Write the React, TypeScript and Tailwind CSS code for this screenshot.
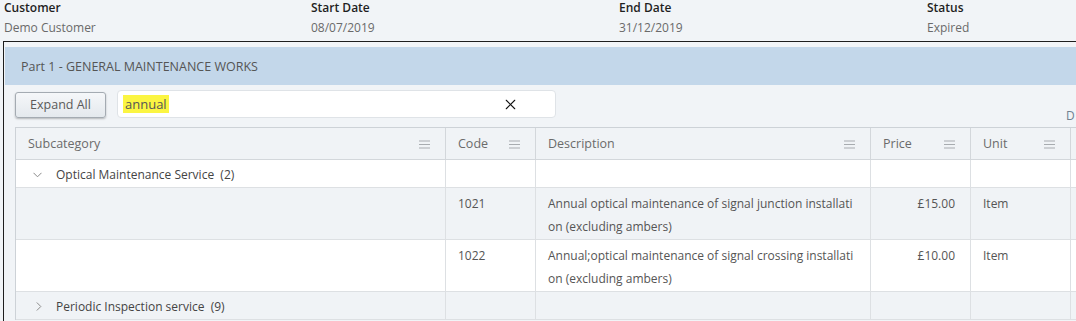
import React from 'react';
import { X } from 'lucide-react';

const font = { fontFamily: '"Open Sans", "Noto Sans", sans-serif' };

const MenuIcon = () => (
  <svg width="11" height="9" viewBox="0 0 11 9" className="shrink-0">
    <path d="M0 1h11M0 4.5h11M0 8h11" stroke="#a8acb0" strokeWidth="1.2" />
  </svg>
);

const ChevronDown = () => (
  <svg width="9" height="6" viewBox="0 0 9 6">
    <path d="M0.5 0.8l4 4 4-4" fill="none" stroke="#8a8a8a" strokeWidth="1" />
  </svg>
);

const ChevronRight = () => (
  <svg width="6" height="9" viewBox="0 0 6 9">
    <path d="M0.8 0.5l4 4-4 4" fill="none" stroke="#8a8a8a" strokeWidth="1" />
  </svg>
);

const cols = 'grid grid-cols-[430px_90px_335px_100px_100px_40px]';

export default function App() {
  const info = [
    { label: 'Customer', value: 'Demo Customer' },
    { label: 'Start Date', value: '08/07/2019' },
    { label: 'End Date', value: '31/12/2019' },
    { label: 'Status', value: 'Expired' },
  ];

  const headers = ['Subcategory', 'Code', 'Description', 'Price', 'Unit', ''];

  const items = [
    {
      code: '1021',
      lines: ['Annual optical maintenance of signal junction installati', 'on (excluding ambers)'],
      price: '£15.00',
      unit: 'Item',
      bg: 'bg-[#f0f3f6]',
    },
    {
      code: '1022',
      lines: ['Annual;optical maintenance of signal crossing installati', 'on (excluding ambers)'],
      price: '£10.00',
      unit: 'Item',
      bg: 'bg-white',
    },
  ];

  return (
    <div className="w-[1076px] h-[321px] overflow-hidden bg-[#f1f4f7] text-[12px]" style={font}>
      <div className="grid grid-cols-[307px_308px_308px_308px] pl-[4px]">
        {info.map((f) => (
          <div key={f.label} className="flex flex-col">
            <span className="font-semibold text-[#1f1f1f] leading-[16px]">{f.label}</span>
            <span className="text-[#6a6a6a] leading-[16px] mt-[4px]">{f.value}</span>
          </div>
        ))}
      </div>

      <div className="mt-[5px] ml-[3px] border-l border-t border-[#1e1e1e] pt-[5px] pl-px w-[1200px] h-[300px]">
        <div className="h-[38px] bg-[#c3d7ea] flex items-center pl-[16px] pt-[2px] text-[12.5px] text-[#555]">
          Part 1 - GENERAL MAINTENANCE WORKS
        </div>

        <div className="relative h-[42px] flex items-start pl-[10px]">
          <button className="mt-[7px] h-[26px] w-[91px] rounded-[3px] border border-[#a4abb2] bg-gradient-to-b from-[#f5f7f9] to-[#e4e9ed] text-[12.5px] text-[#5a5a5a] shadow-[0_1px_2px_rgba(0,0,0,0.25)]">
            Expand All
          </button>
          <div className="ml-[11px] mt-[5px] h-[28px] w-[439px] rounded-[4px] border border-[#dfe3e7] bg-white flex items-center pl-[5px] pr-[36px] justify-between">
            <span className="bg-[#fbf542] text-[13px] text-[#555] px-[2px] leading-[18px]">annual</span>
            <X size={17} strokeWidth={1.5} color="#111" />
          </div>
          <span className="absolute left-[1061px] top-[22px] text-[#708090] text-[12px]">D</span>
        </div>

        <div className="ml-[10px] border-l border-t border-[#cdd2d7] text-[#555]">
          <div className={`${cols} h-[32px] bg-[#f0f3f6] border-b border-[#d3d7db] text-[12.5px] text-[#6b6b6b]`}>
            {headers.map((h, i) => (
              <div key={i} className="flex items-center justify-between pl-[12px] pr-[15px] pt-[2px] border-r border-[#d3d7db]">
                <span>{h}</span>
                {h && <MenuIcon />}
              </div>
            ))}
          </div>

          <div className={`${cols} h-[28px] bg-white border-b border-[#dde0e3]`}>
            <div className="flex items-center pl-[17px] pt-[2px] border-r border-[#dde0e3] text-[#444]">
              <ChevronDown />
              <span className="ml-[14px]">Optical Maintenance Service &nbsp;(2)</span>
            </div>
            {[0, 1, 2, 3, 4].map((i) => (
              <div key={i} className="border-r border-[#dde0e3]" />
            ))}
          </div>

          {items.map((it) => (
            <div key={it.code} className={`${cols} h-[52px] ${it.bg} border-b border-[#dde0e3] leading-[23px]`}>
              <div className="border-r border-[#dde0e3]" />
              <div className="pt-[4px] pl-[12px] border-r border-[#dde0e3]">{it.code}</div>
              <div className="pt-[4px] pl-[12px] border-r border-[#dde0e3] whitespace-nowrap overflow-hidden">
                {it.lines[0]}
                <br />
                {it.lines[1]}
              </div>
              <div className="pt-[4px] pr-[15px] text-right border-r border-[#dde0e3]">{it.price}</div>
              <div className="pt-[4px] pl-[12px] border-r border-[#dde0e3]">{it.unit}</div>
              <div className="border-r border-[#dde0e3]" />
            </div>
          ))}

          <div className={`${cols} h-[28px] bg-[#f0f3f6] border-b border-[#dde0e3]`}>
            <div className="flex items-center pl-[20px] pt-[2px] border-r border-[#dde0e3] text-[#444]">
              <ChevronRight />
              <span className="ml-[14px]">Periodic Inspection service &nbsp;(9)</span>
            </div>
            {[0, 1, 2, 3, 4].map((i) => (
              <div key={i} className="border-r border-[#dde0e3]" />
            ))}
          </div>
        </div>
      </div>
    </div>
  );
}
